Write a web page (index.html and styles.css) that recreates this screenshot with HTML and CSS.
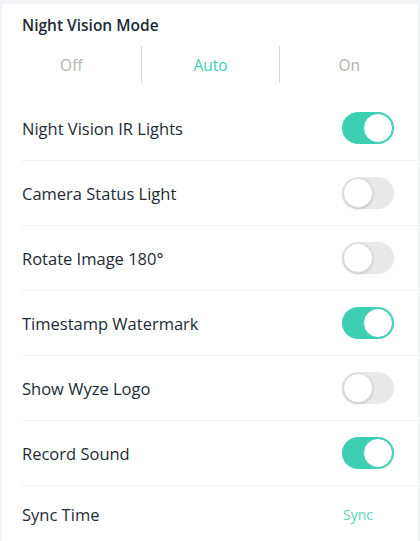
FILE: index.html
```html
<!DOCTYPE html>
<html lang="en">

<head>
    <meta charset="UTF-8">
    <meta name="viewport" content="width=device-width, initial-scale=1.0">
    <title>Camera Settings</title>

    <link rel="stylesheet" href="styles.css">
</head>

<body>
    <div class="card">
        <div class="title">Night Vision Mode</div>

        <div class="modes">
            <button class="mode">Off</button>
            <button class="mode active">Auto</button>
            <button class="mode">On</button>
        </div>

        <div class="row">
            <span class="label">Night Vision IR Lights</span>
            <button class="toggle on"></button>
        </div>
        <div class="row">
            <span class="label">Camera Status Light</span>
            <button class="toggle"></button>
        </div>
        <div class="row">
            <span class="label">Rotate Image 180°</span>
            <button class="toggle"></button>
        </div>
        <div class="row">
            <span class="label">Timestamp Watermark</span>
            <button class="toggle on"></button>
        </div>
        <div class="row">
            <span class="label">Show Wyze Logo</span>
            <button class="toggle"></button>
        </div>
        <div class="row">
            <span class="label">Record Sound</span>
            <button class="toggle on"></button>
        </div>
        <div class="row last">
            <span class="label">Sync Time</span>
            <button class="sync">Sync</button>
        </div>
    </div>

    <script>
        const toggles = document.querySelectorAll(".toggle");
        toggles.forEach(toggle => {
            toggle.addEventListener("click", () => toggle.classList.toggle("on"));
        });

        const modes = document.querySelectorAll(".mode");
        modes.forEach(mode => {
            mode.addEventListener("click", () => {
                modes.forEach(m => m.classList.remove("active"));
                mode.classList.add("active");
            });
        });
    </script>
</body>

</html>
```

FILE: styles.css
```css
body {
    margin: 0;
    padding: 4px 2px 0;
    background-color: #f1f3f7;
    font-family: "Open Sans", Lato, sans-serif;
    color: #1d2b36;
    overflow: hidden;
}

.card {
    background-color: #ffffff;
    min-height: 540px;
}

.title {
    padding: 10px 0 0 20px;
    font-size: 15.5px;
    line-height: 22px;
    font-weight: 600;
}

.modes {
    display: grid;
    grid-template-columns: 1fr 1fr 1fr;
    margin: 10px 0 13px;
    height: 37px;
}

.mode {
    border: none;
    background: none;
    font-family: inherit;
    font-size: 15.5px;
    color: #b3b3b3;
    padding: 0;
}

.mode + .mode {
    border-left: 1px solid #d6d6d6;
}

.mode.active {
    color: #3ccfb4;
}

.row {
    display: flex;
    justify-content: space-between;
    align-items: center;
    height: 64px;
    margin-left: 20px;
    padding-right: 24px;
    border-bottom: 1px solid #f1f1f4;
}

.row.last {
    height: 56px;
    border-bottom: none;
}

.label {
    font-size: 16.5px;
}

.toggle {
    position: relative;
    width: 52px;
    height: 32px;
    border: none;
    border-radius: 16px;
    background-color: #e9e9e9;
    padding: 0;
}

.toggle::after {
    content: "";
    position: absolute;
    top: 1px;
    left: 1px;
    width: 28px;
    height: 28px;
    border-radius: 50%;
    background-color: #ffffff;
    border: 1px solid #dedede;
    box-shadow: 0 1px 3px rgba(0, 0, 0, 0.18);
}

.toggle.on {
    background-color: #3ccfb4;
}

.toggle.on::after {
    left: 21px;
    border-color: #3ccfb4;
    box-shadow: none;
}

.sync {
    border: none;
    background: none;
    font-family: inherit;
    font-size: 14px;
    color: #55d6bd;
    padding: 0 21px 0 0;
}
```
